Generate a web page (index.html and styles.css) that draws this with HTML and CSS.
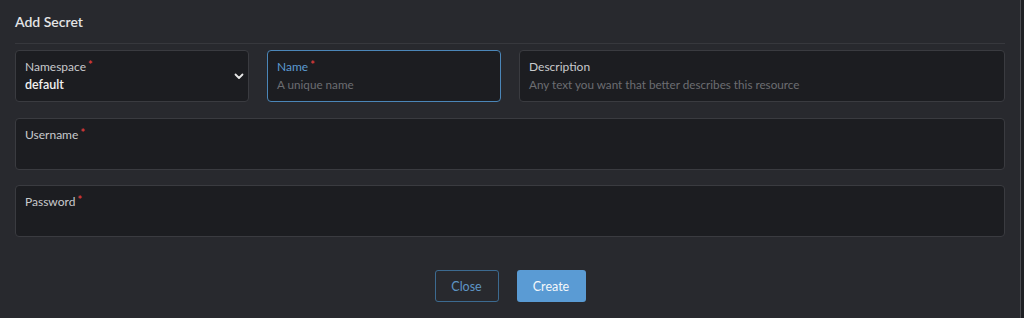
FILE: index.html
```html
<!DOCTYPE html>
<html lang="en">
<head>
  <meta charset="UTF-8" />
  <meta name="viewport" content="width=device-width, initial-scale=1.0"/>
  <title>Add Secret</title>
  <link rel="stylesheet" href="styles.css">
</head>
<body>
  <div class="page">
    <div class="main">
      <h1 class="title">Add Secret</h1>

      <div class="fields">
        <div class="field select">
          <div class="label">Namespace <span class="req">*</span></div>
          <div class="value">default</div>
          <svg class="chevron" width="10" height="7" viewBox="0 0 10 7">
            <path d="M1.5 1.5 L5 5 L8.5 1.5" fill="none" stroke="#e8e8e8" stroke-width="1.8" stroke-linecap="round" stroke-linejoin="round"/>
          </svg>
        </div>

        <div class="field focused">
          <div class="label">Name <span class="req">*</span></div>
          <div class="placeholder">A unique name</div>
        </div>

        <div class="field wide">
          <div class="label">Description</div>
          <div class="placeholder">Any text you want that better describes this resource</div>
        </div>

        <div class="field full">
          <div class="label">Username <span class="req">*</span></div>
        </div>

        <div class="field full">
          <div class="label">Password <span class="req">*</span></div>
        </div>
      </div>

      <div class="actions">
        <button class="btn outline">Close</button>
        <button class="btn primary">Create</button>
      </div>
    </div>
    <div class="scrollbar"></div>
  </div>
</body>
</html>
```

FILE: styles.css
```css
body {
  margin: 0;
  font-family: Lato, "Open Sans", sans-serif;
  background-color: #28292e;
  color: #e6e6e6;
}

.page {
  display: flex;
  height: 318px;
}

.main {
  flex: 1;
  padding: 0 15px;
}

.scrollbar {
  width: 3px;
  border-left: 1px solid #4a4b50;
  background-color: #1e1f23;
}

.title {
  margin: 0 0 6px;
  padding-top: 13px;
  height: 44px;
  box-sizing: border-box;
  font-size: 14px;
  line-height: 17px;
  font-weight: 600;
  color: #e4e4e6;
  border-bottom: 1px solid #37383d;
}

.fields {
  display: grid;
  grid-template-columns: repeat(4, 1fr);
  column-gap: 18px;
  row-gap: 15.5px;
}

.field {
  position: relative;
  height: 52px;
  box-sizing: border-box;
  padding: 8px 9px;
  background-color: #1c1d21;
  border: 1px solid #3a3b40;
  border-radius: 4px;
}

.field.wide {
  grid-column: span 2;
}

.field.full {
  grid-column: span 4;
}

.field.focused {
  border-color: #4b86b8;
}

.label {
  font-size: 12px;
  line-height: 16px;
  color: #c9cacd;
}

.focused .label {
  color: #5b9bd2;
}

.req {
  color: #d93a3a;
  font-size: 11px;
  font-weight: 700;
  vertical-align: top;
  position: relative;
  top: -2px;
  margin-left: -1px;
}

.value {
  font-size: 12.5px;
  line-height: 19px;
  font-weight: 600;
  color: #f2f2f2;
}

.placeholder {
  font-size: 11.7px;
  line-height: 19px;
  color: #6c6d72;
}

.chevron {
  position: absolute;
  right: 4px;
  top: 22px;
}

.actions {
  display: flex;
  justify-content: center;
  gap: 18px;
  margin-top: 33px;
}

.btn {
  height: 32px;
  box-sizing: border-box;
  border-radius: 3px;
  font-family: Lato, sans-serif;
  font-size: 12.5px;
  cursor: pointer;
}

.btn.outline {
  width: 64px;
  background-color: transparent;
  border: 1px solid #3c6a90;
  color: #5e95c6;
}

.btn.primary {
  width: 69px;
  background-color: #5a9bd4;
  border: none;
  color: #f4f7fa;
}
```
